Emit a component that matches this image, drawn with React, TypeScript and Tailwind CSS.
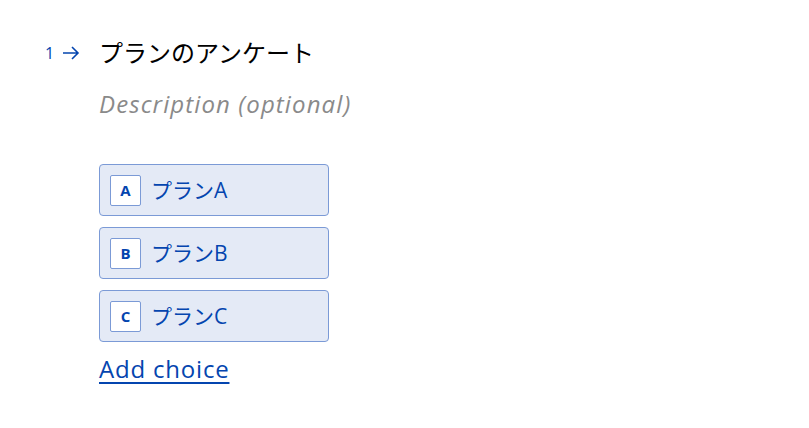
import React from "react";

const choices = [
  { key: "A", label: "プランA" },
  { key: "B", label: "プランB" },
  { key: "C", label: "プランC" },
];

export default function App() {
  return (
    <div
      className="min-h-screen bg-white pl-[45px] pt-[36px]"
      style={{ fontFamily: '"Open Sans", "Noto Sans CJK JP", sans-serif' }}
    >
      <div className="flex items-start">
        <div className="flex w-[54px] items-center gap-[8px] pt-[5px] text-[#0445af]">
          <span className="text-[16px] leading-[24px]">1</span>
          <svg width="18" height="16" viewBox="0 0 18 16" fill="none" stroke="currentColor" strokeWidth="1.6">
            <path d="M1 8h15M10 2l6 6-6 6" />
          </svg>
        </div>
        <div className="flex flex-col">
          <h1 className="text-[24px] leading-[34px] text-black">プランのアンケート</h1>
          <p className="mt-[18px] text-[24px] italic leading-[32px] tracking-[1.1px] text-[#8a8a8a]">
            Description (optional)
          </p>
          <div className="mt-[44px] flex flex-col gap-[11px]">
            {choices.map((c) => (
              <div
                key={c.key}
                className="flex h-[52px] w-[230px] items-center gap-[10px] rounded-[4px] border border-[#7b9ad6] bg-[#e4eaf6] px-[10px] text-[#0445af]"
              >
                <span className="flex h-[31px] w-[31px] items-center justify-center rounded-[2px] border border-[#7b9ad6] bg-white text-[15px] font-bold">
                  {c.key}
                </span>
                <span className="text-[21px] leading-[28px]">{c.label}</span>
              </div>
            ))}
          </div>
          <a
            href="#"
            className="mt-[12px] text-[24px] leading-[30px] tracking-[0.8px] text-[#0445af] underline underline-offset-[4px]"
          >
            Add choice
          </a>
        </div>
      </div>
    </div>
  );
}
